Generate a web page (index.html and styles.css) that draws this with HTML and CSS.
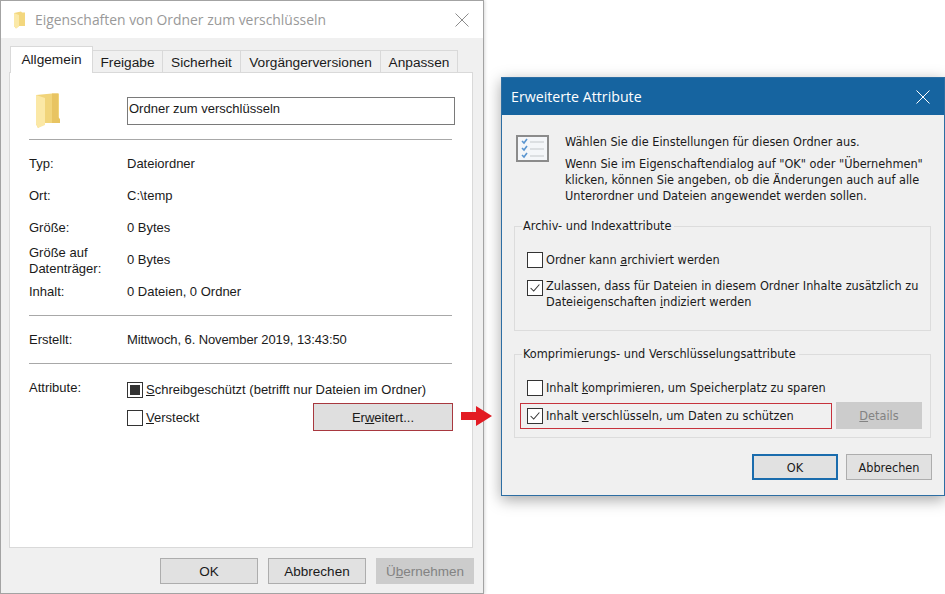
FILE: index.html
```html
<!DOCTYPE html>
<html lang="de">
<head>
<meta charset="utf-8">
<title>Eigenschaften</title>
<link rel="stylesheet" href="styles.css">
</head>
<body>
<section class="win props">
  <header class="titlebar">
    <svg class="title-folder" viewBox="0 0 14 18"><path d="M1 2 L8 0.5 L9 1.5 H12 V15 H6 L3 17.5 L1 15 Z" fill="#f3d77e"/><path d="M1 2 L6 4 V15.5 L3 17.5 L1 15 Z" fill="#fbe9a8"/></svg>
    <span class="title-text">Eigenschaften von Ordner zum verschlüsseln</span>
    <svg class="close" viewBox="0 0 14 14"><path d="M0.5 0.5 L13.5 13.5 M13.5 0.5 L0.5 13.5" stroke="#8c8c8c" fill="none"/></svg>
  </header>
  <div class="props-body">
    <nav class="tabs">
      <span class="tab active">Allgemein</span>
      <span class="tab t-frei">Freigabe</span>
      <span class="tab t-sich">Sicherheit</span>
      <span class="tab t-vorg">Vorgängerversionen</span>
      <span class="tab t-anp">Anpassen</span>
    </nav>
    <div class="panel">
      <div class="name-row">
        <svg class="big-folder" viewBox="0 0 26 36"><path d="M1 2 L17 0.5 H24 V26 H25 V30 H10 L3 35 L1 31 Z" fill="#f1d47a"/><path d="M17 0.5 H23 V24 L25 26 V30 H17 Z" fill="#e8c462"/><path d="M1 2 L10 5 V32 L3 35 L1 31 Z" fill="#fbe8a6"/></svg>
        <div class="name-input">Ordner zum verschlüsseln</div>
      </div>
      <hr class="rule r1">
      <dl class="info">
        <dt>Typ:</dt><dd>Dateiordner</dd>
        <dt>Ort:</dt><dd>C:\temp</dd>
        <dt>Größe:</dt><dd>0 Bytes</dd>
        <dt class="two">Größe auf<br>Datenträger:</dt><dd>0 Bytes</dd>
        <dt>Inhalt:</dt><dd>0 Dateien, 0 Ordner</dd>
      </dl>
      <hr class="rule r2">
      <dl class="info single">
        <dt>Erstellt:</dt><dd>Mittwoch, 6. November 2019, 13:43:50</dd>
      </dl>
      <hr class="rule r3">
      <div class="attrs">
        <span class="attr-label">Attribute:</span>
        <div class="attr-col">
          <label class="check"><span class="box"><span class="tri"></span></span><span class="low"><u>S</u>chreibgeschützt (betrifft nur Dateien im Ordner)</span></label>
          <div class="attr-row2">
            <label class="check"><span class="box"></span><span class="low"><u>V</u>ersteckt</span></label>
            <button class="btn erw">Er<u>w</u>eitert...</button>
          </div>
        </div>
      </div>
    </div>
    <footer class="props-foot">
      <button class="btn">OK</button>
      <button class="btn">Abbrechen</button>
      <button class="btn off">Ü<u>b</u>ernehmen</button>
    </footer>
  </div>
</section>

<svg class="arrow" viewBox="0 0 31 20"><path d="M0 6 H15 V0 L31 10 L15 20 V14 H0 Z" fill="#e31b23"/></svg>

<section class="win adv">
  <header class="adv-title">
    <span>Erweiterte Attribute</span>
    <svg class="close" viewBox="0 0 14 14"><path d="M0.5 0.5 L13.5 13.5 M13.5 0.5 L0.5 13.5" stroke="#fff" fill="none"/></svg>
  </header>
  <div class="adv-body">
    <div class="intro">
      <svg class="list-icon" viewBox="0 0 33 27">
        <rect x="1" y="1" width="31" height="25" fill="#f4f6f9" stroke="#8b8b8b" stroke-width="2"/>
        <path d="M6 6 L8 8 L11 4 M6 13 L8 15 L11 11 M6 20 L8 22 L11 18" stroke="#5a95d0" stroke-width="1.6" fill="none"/>
        <path d="M14 7 H28 M14 14 H28 M14 21 H28" stroke="#c4c8cc" stroke-width="1.2"/>
      </svg>
      <div class="intro-text">
        <p class="lead">Wählen Sie die Einstellungen für diesen Ordner aus.</p>
        <p>Wenn Sie im Eigenschaftendialog auf "OK" oder "Übernehmen"<br>klicken, können Sie angeben, ob die Änderungen auch auf alle<br>Unterordner und Dateien angewendet werden sollen.</p>
      </div>
    </div>
    <fieldset class="group g1">
      <legend>Archiv- und Indexattribute</legend>
      <label class="check"><span class="box"></span><span>Ordner kann <u>a</u>rchiviert werden</span></label>
      <label class="check top">
        <span class="box"><svg viewBox="0 0 16 16"><path d="M3 8 L6.5 11.5 L13 4" stroke="#333" stroke-width="1.2" fill="none"/></svg></span>
        <span class="multi">Zulassen, dass für Dateien in diesem Ordner Inhalte zusätzlich zu<br>Dateieigenschaften <u>i</u>ndiziert werden</span>
      </label>
    </fieldset>
    <fieldset class="group g2">
      <legend>Komprimierungs- und Verschlüsselungsattribute</legend>
      <label class="check"><span class="box"></span><span>Inhalt <u>k</u>omprimieren, um Speicherplatz zu sparen</span></label>
      <div class="enc-row">
        <label class="check enc">
          <span class="box"><svg viewBox="0 0 16 16"><path d="M3 8 L6.5 11.5 L13 4" stroke="#333" stroke-width="1.2" fill="none"/></svg></span>
          <span>Inhalt <u>v</u>erschlüsseln, um Daten zu schützen</span>
        </label>
        <button class="btn off details"><u>D</u>etails</button>
      </div>
    </fieldset>
    <footer class="adv-foot">
      <button class="btn primary">OK</button>
      <button class="btn">Abbrechen</button>
    </footer>
  </div>
</section>
</body>
</html>
```
FILE: styles.css
```css
* { box-sizing: border-box; }
html, body { margin: 0; padding: 0; background: #fff; }
body { width: 945px; height: 594px; position: relative; overflow: hidden; font-family: "Liberation Sans", Arial, sans-serif; font-size: 13px; color: #1a1a1a; }
.win { position: absolute; }
.props { left: 0; top: 0; width: 484px; height: 594px; border: 1px solid #a3a3a3; background: #f0f0f0; box-shadow: 1px 0 3px rgba(0,0,0,.15); display: flex; flex-direction: column; }
.titlebar { height: 37px; background: #fff; display: flex; align-items: center; padding: 0 14px 0 12px; flex: none; }
.title-folder { width: 14px; height: 18px; margin-right: 8px; flex: none; }
.title-text { font-family: "Open Sans", sans-serif; font-size: 13.9px; color: #999; flex: 1; }
.close { width: 14px; height: 14px; flex: none; }
.props-body { flex: 1; padding: 8px 9px 0 8px; display: flex; flex-direction: column; }
.tabs { display: flex; height: 26px; align-items: flex-end; padding-left: 1px; position: relative; z-index: 1; }
.tab { height: 22px; border: 1px solid #d9d9d9; border-bottom: 0; border-left: 0; background: #f0f0f0; display: flex; align-items: center; justify-content: center; font-size: 13.7px; padding-top: 2px; }
.tab.active { height: 27px; width: 83px; margin-bottom: -1px; background: #fff; border: 1px solid #d9d9d9; border-bottom: 0; padding-top: 0; padding-bottom: 1px; }
.t-frei { width: 70px; }
.t-sich { width: 78px; }
.t-vorg { width: 140px; }
.t-anp { width: 77px; }
.panel { height: 476px; width: 464px; background: #fff; border: 1px solid #d9d9d9; padding: 24px 20px 0 19px; display: flex; flex-direction: column; }
.name-row { display: flex; align-items: flex-start; height: 42px; flex: none; }
.big-folder { width: 26px; height: 36px; margin: -4px 0 0 6px; flex: none; }
.name-input { width: 328px; height: 28px; margin-left: 66px; border: 1px solid #7a7a7a; padding: 3px 1px; font-size: 13px; line-height: 16px; flex: none; }
.rule { border: 0; height: 1px; background: #a8a8a8; margin: 0; width: 423px; flex: none; }
.info { display: grid; grid-template-columns: 98px 1fr; margin: 0; padding: 16px 0 0; grid-template-rows: repeat(4, 32px) 15px; height: 175px; flex: none; }
.info dt, .info dd { margin: 0; height: 16px; line-height: 16px; font-size: 13px; }
.info .two { margin-top: -7px; line-height: 15.5px; height: 31px; }
.info.single { padding: 16px 0 14px; grid-template-rows: 17px; height: 47px; }
.single dd { letter-spacing: -0.1px; }
.attrs { display: flex; padding-top: 15px; }
.attr-label { width: 98px; line-height: 16px; padding-top: 1px; flex: none; }
.attr-col { flex: 1; display: flex; flex-direction: column; margin-top: 2px; }
.check { display: flex; align-items: center; gap: 3px; font-size: 13px; line-height: 16px; }
.check.top { align-items: flex-start; }
.low { padding-top: 1px; }
.multi { margin-top: -2px; white-space: nowrap; }
.box { width: 16px; height: 16px; border: 1px solid #333; background: #fff; flex: none; display: flex; align-items: center; justify-content: center; }
.box svg { width: 14px; height: 14px; }
.tri { width: 10px; height: 10px; background: #333; }
.attr-row2 { display: flex; justify-content: space-between; align-items: flex-start; margin-top: 11px; width: 326px; }
.btn { font: inherit; font-size: 13.5px; color: #1a1a1a; width: 98px; height: 26px; background: #e1e1e1; border: 1px solid #adadad; padding: 0; flex: none; }
.erw { width: 140px; height: 28px; margin-top: -6px; border: 1px solid #a8383f; background: #dfdfdf; font-size: 13px; }
.props-foot { display: flex; justify-content: flex-end; gap: 10px; margin-top: 10px; }
.off { background: #ccc; border-color: #ccc; color: #838383; }
.arrow { position: absolute; left: 461px; top: 406px; width: 31px; height: 20px; }
.adv { left: 501px; top: 77px; width: 444px; height: 419px; border: 1px solid #2d6ea3; background: #f0f0f0; box-shadow: 0 4px 14px rgba(0,0,0,.35); display: flex; flex-direction: column; font-family: "DejaVu Sans", sans-serif; font-stretch: condensed; font-size: 12.6px; }
.adv-title { height: 37px; background: #1664a0; color: #fff; display: flex; align-items: center; justify-content: space-between; padding: 0 14px 0 9px; font-family: "Open Sans", sans-serif; font-stretch: normal; font-size: 14.2px; flex: none; }
.adv-body { flex: 1; padding: 20px 12px 0 12px; display: flex; flex-direction: column; }
.intro { display: flex; height: 83px; flex: none; }
.list-icon { width: 33px; height: 27px; margin-left: 2px; flex: none; }
.intro-text { margin-left: 16px; line-height: 16px; }
.intro-text p { margin: 0; white-space: nowrap; }
.intro-text .lead { margin: -1px 0 6px; }
.group { border: 1px solid #dcdcdc; margin: 0; padding: 0 12px; min-inline-size: 0; width: 417px; position: relative; flex: none; }
.group legend { padding: 0 3px 0 1px; margin-left: -5px; line-height: 16px; font-size: 12.6px; }
.group .check { font-size: 12.6px; line-height: 16px; }
.g1 { height: 113px; padding-top: 18px; }
.g1 .check.top { margin-top: 12px; }
.g2 { height: 92px; margin-top: 15px; padding-top: 18px; }
.enc-row { display: flex; align-items: center; margin-top: 6px; margin-left: -7px; }
.enc { width: 312px; height: 26px; border: 1px solid #c6323c; padding-left: 6px; flex: none; }
.details { width: 86px; height: 27px; margin-left: 4px; font-family: "DejaVu Sans", sans-serif; font-stretch: condensed; font-size: 12.6px; }
.adv-foot { display: flex; justify-content: flex-end; gap: 8px; margin-top: 16px; }
.adv-foot .btn { width: 86px; font-family: "DejaVu Sans", sans-serif; font-stretch: condensed; font-size: 12.6px; }
.primary { border: 2px solid #1a6cad !important; }
```
